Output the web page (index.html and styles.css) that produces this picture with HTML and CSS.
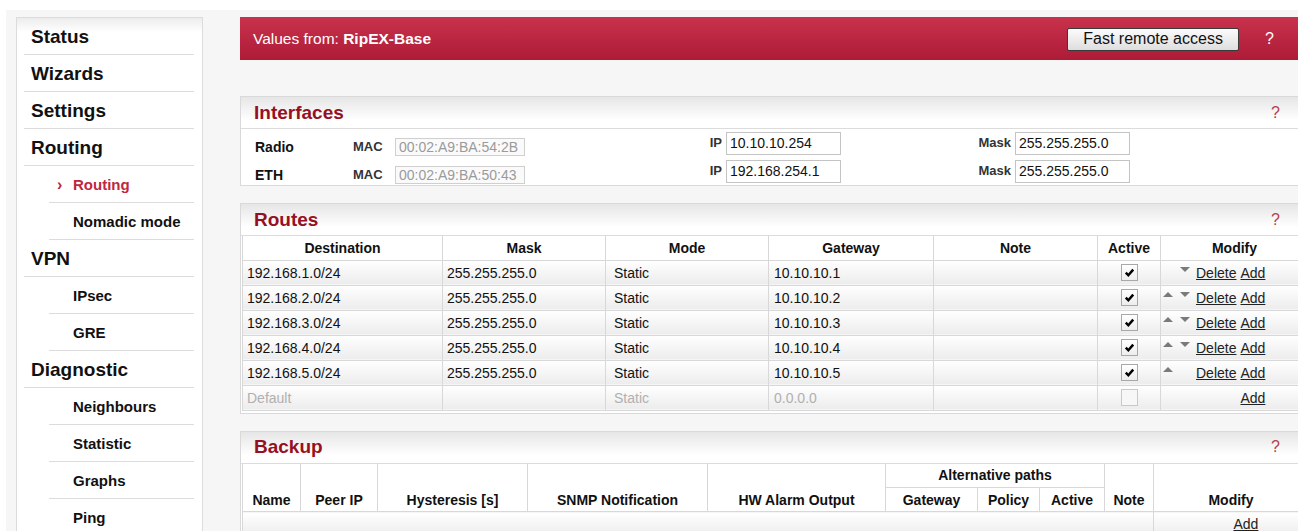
FILE: index.html
```html
<!DOCTYPE html>
<html lang="en">
<head>
<meta charset="utf-8">
<title>RipEX - Routing</title>
<link rel="stylesheet" href="styles.css">
</head>
<body>
<div class="page">
  <nav class="sidebar">
    <a class="nav-top">Status</a>
    <a class="nav-top">Wizards</a>
    <a class="nav-top">Settings</a>
    <a class="nav-top">Routing</a>
    <a class="nav-sub active"><span class="chev">&rsaquo;</span>Routing</a>
    <a class="nav-sub">Nomadic mode</a>
    <a class="nav-top">VPN</a>
    <a class="nav-sub">IPsec</a>
    <a class="nav-sub">GRE</a>
    <a class="nav-top">Diagnostic</a>
    <a class="nav-sub">Neighbours</a>
    <a class="nav-sub">Statistic</a>
    <a class="nav-sub">Graphs</a>
    <a class="nav-sub">Ping</a>
  </nav>

  <main class="main">
    <header class="topbar">
      <div class="source">Values from: <b>RipEX-Base</b></div>
      <button class="btn" type="button">Fast remote access</button>
      <span class="help help-light">?</span>
    </header>

    <section class="panel panel-ifaces">
      <div class="panel-head">
        <h2 class="panel-title">Interfaces</h2>
        <span class="help">?</span>
      </div>
      <div class="iface-row">
        <span class="iface-name">Radio</span>
        <span class="lbl lbl-mac">MAC</span>
        <input class="field field-ro" value="00:02:A9:BA:54:2B" readonly>
        <span class="lbl lbl-right">IP</span>
        <input class="field" value="10.10.10.254">
        <span class="lbl lbl-right">Mask</span>
        <input class="field" value="255.255.255.0">
      </div>
      <div class="iface-row">
        <span class="iface-name">ETH</span>
        <span class="lbl lbl-mac">MAC</span>
        <input class="field field-ro" value="00:02:A9:BA:50:43" readonly>
        <span class="lbl lbl-right">IP</span>
        <input class="field" value="192.168.254.1">
        <span class="lbl lbl-right">Mask</span>
        <input class="field" value="255.255.255.0">
      </div>
    </section>

    <section class="panel">
      <div class="panel-head">
        <h2 class="panel-title">Routes</h2>
        <span class="help">?</span>
      </div>
      <table class="grid">
        <colgroup>
          <col style="width:200px"><col style="width:163px"><col style="width:163px"><col style="width:165px"><col style="width:164px"><col style="width:63px"><col style="width:148px">
        </colgroup>
        <thead>
          <tr><th>Destination</th><th>Mask</th><th>Mode</th><th>Gateway</th><th>Note</th><th>Active</th><th>Modify</th></tr>
        </thead>
        <tbody>
          <tr>
            <td>192.168.1.0/24</td><td>255.255.255.0</td><td class="mode">Static</td><td class="gw">10.10.10.1</td><td></td>
            <td class="center"><span class="check on"><svg viewBox="0 0 17 17"><path d="M4.3 8.6 L7.2 11.6 L12.7 5.2"/></svg></span></td>
            <td class="modify"><div class="actions"><span class="arr up off"></span><span class="arr down"></span><a class="link del">Delete</a><a class="link">Add</a></div></td>
          </tr>
          <tr>
            <td>192.168.2.0/24</td><td>255.255.255.0</td><td class="mode">Static</td><td class="gw">10.10.10.2</td><td></td>
            <td class="center"><span class="check on"><svg viewBox="0 0 17 17"><path d="M4.3 8.6 L7.2 11.6 L12.7 5.2"/></svg></span></td>
            <td class="modify"><div class="actions"><span class="arr up"></span><span class="arr down"></span><a class="link del">Delete</a><a class="link">Add</a></div></td>
          </tr>
          <tr>
            <td>192.168.3.0/24</td><td>255.255.255.0</td><td class="mode">Static</td><td class="gw">10.10.10.3</td><td></td>
            <td class="center"><span class="check on"><svg viewBox="0 0 17 17"><path d="M4.3 8.6 L7.2 11.6 L12.7 5.2"/></svg></span></td>
            <td class="modify"><div class="actions"><span class="arr up"></span><span class="arr down"></span><a class="link del">Delete</a><a class="link">Add</a></div></td>
          </tr>
          <tr>
            <td>192.168.4.0/24</td><td>255.255.255.0</td><td class="mode">Static</td><td class="gw">10.10.10.4</td><td></td>
            <td class="center"><span class="check on"><svg viewBox="0 0 17 17"><path d="M4.3 8.6 L7.2 11.6 L12.7 5.2"/></svg></span></td>
            <td class="modify"><div class="actions"><span class="arr up"></span><span class="arr down"></span><a class="link del">Delete</a><a class="link">Add</a></div></td>
          </tr>
          <tr>
            <td>192.168.5.0/24</td><td>255.255.255.0</td><td class="mode">Static</td><td class="gw">10.10.10.5</td><td></td>
            <td class="center"><span class="check on"><svg viewBox="0 0 17 17"><path d="M4.3 8.6 L7.2 11.6 L12.7 5.2"/></svg></span></td>
            <td class="modify"><div class="actions"><span class="arr up"></span><span class="arr down off"></span><a class="link del">Delete</a><a class="link">Add</a></div></td>
          </tr>
          <tr class="muted">
            <td>Default</td><td></td><td class="mode">Static</td><td class="gw">0.0.0.0</td><td></td>
            <td class="center"><span class="check"></span></td>
            <td class="modify"><div class="actions"><span class="arr up off"></span><span class="arr down off"></span><a class="link del off">Delete</a><a class="link">Add</a></div></td>
          </tr>
        </tbody>
      </table>
    </section>

    <section class="panel">
      <div class="panel-head">
        <h2 class="panel-title">Backup</h2>
        <span class="help">?</span>
      </div>
      <table class="grid">
        <colgroup>
          <col style="width:58px"><col style="width:77px"><col style="width:150px"><col style="width:180px"><col style="width:178px"><col style="width:92px"><col style="width:62px"><col style="width:65px"><col style="width:49px"><col style="width:155px">
        </colgroup>
        <thead>
          <tr>
            <th rowspan="2" class="bottom">Name</th>
            <th rowspan="2" class="bottom">Peer IP</th>
            <th rowspan="2" class="bottom">Hysteresis [s]</th>
            <th rowspan="2" class="bottom">SNMP Notification</th>
            <th rowspan="2" class="bottom">HW Alarm Output</th>
            <th colspan="3">Alternative paths</th>
            <th rowspan="2" class="bottom">Note</th>
            <th rowspan="2" class="bottom">Modify</th>
          </tr>
          <tr><th>Gateway</th><th>Policy</th><th>Active</th></tr>
        </thead>
        <tbody>
          <tr>
            <td colspan="9"></td>
            <td class="modify"><div class="actions"><span class="arr up off"></span><span class="arr down off"></span><a class="link del off">Delete</a><a class="link">Add</a></div></td>
          </tr>
        </tbody>
      </table>
    </section>
  </main>
</div>
</body>
</html>
```

FILE: styles.css
```css
* { box-sizing: border-box; }

html, body {
  margin: 0;
  background: #fff;
  overflow: hidden;
}

body {
  font-family: "Liberation Sans", Arial, sans-serif;
  font-size: 14px;
  color: #111;
}

.page {
  margin: 10px 0 0 6px;
  padding: 7px 0 0 10px;
  background: #f6f6f6;
  display: flex;
  align-items: flex-start;
  gap: 37px;
  min-height: 600px;
  width: 1400px;
}

/* ---- left navigation ---- */
.sidebar {
  width: 187px;
  flex-shrink: 0;
  background: linear-gradient(#ececec, #fff 14px);
  border: 1px solid #dcdcdc;
  padding: 0 8px 0 7px;
  display: flex;
  flex-direction: column;
}

.sidebar a {
  display: block;
  height: 37px;
  padding-top: 2px;
  line-height: 34px;
  border-bottom: 1px solid #dcdcdc;
  font-weight: bold;
  color: #111;
  white-space: nowrap;
}

.nav-top {
  font-size: 19px;
  padding-left: 7px;
}

.nav-sub {
  font-size: 15px;
  margin-left: 25px;
  padding-left: 24px;
  color: #1a1a22;
}

.nav-sub.active { color: #c0263e; }

.chev {
  display: inline-block;
  width: 16px;
  margin-left: -16px;
  font-size: 16px;
}

/* ---- main column ---- */
.main {
  width: 1070px;
  flex-shrink: 0;
}

.topbar {
  height: 43px;
  display: flex;
  align-items: center;
  padding: 0 36px 0 13px;
  background: linear-gradient(#c9324d, #ad1b36);
  color: #fff;
  margin-bottom: 36px;
}

.source {
  flex: 1;
  font-size: 15.5px;
}

.btn {
  width: 172px;
  height: 23px;
  margin: 1px 26px 0 0;
  padding: 0;
  border: 1px solid #3a3a3a;
  border-radius: 2px;
  background: linear-gradient(#fbfbfb, #dedede);
  font-family: "Liberation Sans", Arial, sans-serif;
  font-size: 16px;
  color: #111;
}

.help {
  font-size: 16px;
  color: #b2414e;
}

.help-light { color: #fff; }

/* ---- panels ---- */
.panel {
  background: #fff;
  border: 1px solid #d9d9d9;
  margin-bottom: 17px;
}

.panel-head {
  height: 32px;
  border-bottom: 1px solid #dcdcdc;
  background: linear-gradient(#e6e6e6, #fff 75%);
  display: flex;
  align-items: center;
  justify-content: space-between;
  padding: 0 29px 0 13px;
}

.panel-title {
  margin: 0;
  font-size: 19px;
  font-weight: bold;
  color: #97101f;
}

/* ---- interfaces ---- */
.iface-row {
  display: grid;
  grid-template-columns: 98px 42px 130px 201px 115px 174px 115px;
  align-items: center;
  height: 28px;
  padding-left: 14px;
}

.iface-name {
  align-self: end;
  line-height: 18px;
  margin-bottom: 1px;
  font-weight: bold;
  font-size: 14px;
}

.lbl {
  font-weight: bold;
  font-size: 13px;
  color: #333;
}

.lbl-mac {
  align-self: end;
  line-height: 18px;
  margin-bottom: 1px;
}

.lbl-right {
  text-align: right;
  padding-right: 4px;
  margin-top: -2px;
}

.field {
  height: 23px;
  width: 115px;
  padding: 0 3px;
  border: 1px solid #c4c4c4;
  background: #fff;
  font-family: "Liberation Sans", Arial, sans-serif;
  font-size: 14px;
  color: #111;
}

.field-ro {
  width: 130px;
  height: 18px;
  align-self: end;
  margin-bottom: 1px;
  border-color: #cfcfcf;
  background: #fafafa;
  color: #9a9a9a;
}

/* ---- data tables ---- */
.grid {
  border-collapse: collapse;
  table-layout: fixed;
  width: 1066px;
  margin: 0 0 2px 1px;
}

.grid th,
.grid td {
  border: 1px solid #d8d8d8;
  font-size: 14px;
  white-space: nowrap;
  overflow: hidden;
}

.grid thead tr:first-child th { border-top: 0; }

.grid th {
  height: 24px;
  padding: 0 4px;
  font-weight: bold;
  background: #fff;
  text-align: center;
}

.grid th.bottom {
  vertical-align: bottom;
  padding-bottom: 3px;
}

.grid td {
  height: 25px;
  padding: 0 4px;
  background: linear-gradient(#fff, #ececec);
}

.grid td.mode { padding-left: 8px; }
.grid td.gw { padding-left: 5px; }
.grid td.center { text-align: center; padding: 0; }
.grid td.modify { padding: 0 0 0 2px; }

.muted td { color: #b0b0b0; }

.check {
  display: inline-block;
  width: 17px;
  height: 17px;
  vertical-align: middle;
  border: 1px solid #c9c9c9;
  background: #f7f7f7;
}

.check.on {
  border-color: #a8a8a8;
  background: linear-gradient(#fff, #ededed);
}

.check svg {
  display: block;
  width: 15px;
  height: 15px;
}

.check path {
  fill: none;
  stroke: #000;
  stroke-width: 2.8;
}

.actions {
  display: flex;
  align-items: center;
}

.arr {
  width: 10px;
  height: 0;
  border-left: 5px solid transparent;
  border-right: 5px solid transparent;
  margin-bottom: 7px;
}

.arr.up {
  border-bottom: 5px solid #7a7a7a;
  margin-right: 7px;
}

.arr.down {
  border-top: 5px solid #7a7a7a;
  margin-right: 6px;
}

.off { visibility: hidden; }

.link {
  color: #222;
  text-decoration: underline;
}

.link.del { margin-right: 4px; }
```
